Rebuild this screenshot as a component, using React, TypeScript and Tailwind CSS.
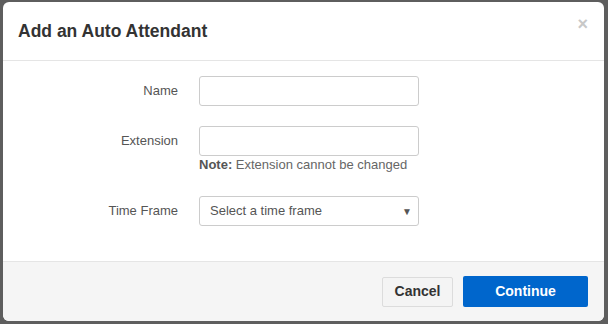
import React from "react";

const Field = ({ label, children }: { label: string; children: React.ReactNode }) => (
  <div className="flex items-start">
    <label className="w-[175px] shrink-0 pr-0 text-right text-[13px] leading-[30px] text-[#555]">{label}</label>
    <div className="ml-[21px] w-[220px]">{children}</div>
  </div>
);

export default function App() {
  return (
    <div
      className="w-[608px] h-[324px] bg-[#5e5e5e] pt-[2px] pl-[3px] pr-[4px] pb-[3px]"
      style={{ fontFamily: '"Liberation Sans", Arial, sans-serif' }}
    >
      <div className="flex h-full flex-col rounded-[6px] bg-white">
        <div className="relative flex h-[59px] shrink-0 items-center border-b border-[#e5e5e5] px-[15px]">
          <h2 className="text-[17.5px] font-bold text-[#333]">Add an Auto Attendant</h2>
          <span className="absolute right-[16px] top-[9px] text-[18px] font-bold text-[#c8c8c8]">×</span>
        </div>

        <div className="flex flex-1 flex-col gap-[20px] pt-[15px]">
          <Field label="Name">
            <input className="block h-[30px] w-full rounded-[3px] border border-[#ccc] bg-white px-[10px] text-[13px] outline-none" />
          </Field>
          <Field label="Extension">
            <input className="block h-[30px] w-full rounded-[3px] border border-[#ccc] bg-white px-[10px] text-[13px] outline-none" />
            <p className="mt-[1px] whitespace-nowrap text-[13px] leading-[16px] text-[#666]">
              <b className="text-[#555]">Note:</b> Extension cannot be changed
            </p>
          </Field>
          <div className="mt-[3px]">
            <Field label="Time Frame">
              <div className="flex h-[30px] w-full items-center justify-between rounded-[3px] border border-[#ccc] bg-white pl-[10px] pr-[6px] text-[13px] text-[#555]">
                <span>Select a time frame</span>
                <span className="text-[10px] text-[#555]">▼</span>
              </div>
            </Field>
          </div>
        </div>

        <div className="flex h-[60px] shrink-0 items-center justify-end gap-[10px] rounded-b-[6px] border-t border-[#e5e5e5] bg-[#f5f5f5] pr-[16px]">
          <button className="h-[30px] w-[71px] rounded-[2px] border border-[#dcdcdc] bg-[#f4f4f4] text-[14px] font-bold text-[#333]">
            Cancel
          </button>
          <button className="h-[31px] w-[125px] rounded-[2px] bg-[#0066cc] text-[14px] font-bold text-white">
            Continue
          </button>
        </div>
      </div>
    </div>
  );
}
